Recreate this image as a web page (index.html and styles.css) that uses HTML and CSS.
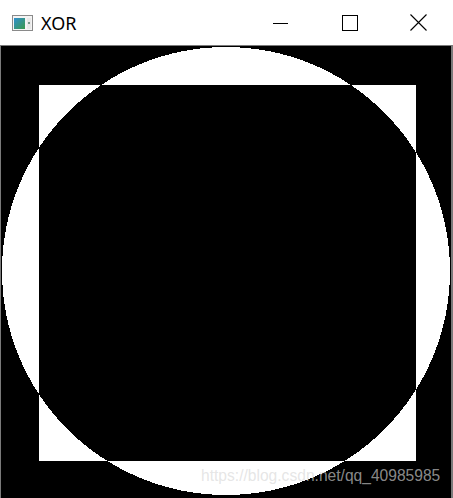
FILE: index.html
```html
<!DOCTYPE html>
<html lang="en">
<head>
    <meta charset="UTF-8">
    <title>XOR</title>
    <link rel="stylesheet" href="styles.css">
</head>
<body>
    <div class="window">
        <div class="titlebar">
            <svg class="app-icon" width="21" height="16" viewBox="0 0 21 16">
                <defs>
                    <linearGradient id="g" x1="0" y1="0" x2="1" y2="1">
                        <stop offset="0" stop-color="#2f8fd0"/>
                        <stop offset="1" stop-color="#3a9a4a"/>
                    </linearGradient>
                </defs>
                <rect x="0.5" y="0.5" width="20" height="15" fill="#f4f4f4" stroke="#8a8a8a"/>
                <rect x="2" y="3" width="11" height="11" fill="url(#g)"/>
                <rect x="15" y="3" width="4" height="11" fill="#e8e8e8"/>
                <rect x="16" y="7" width="2" height="2" fill="#7a9a8a"/>
            </svg>
            <span class="title">XOR</span>
            <div class="controls">
                <div class="ctl">
                    <svg width="16" height="16" viewBox="0 0 16 16"><line x1="0" y1="8.5" x2="15" y2="8.5" stroke="#000" stroke-width="1"/></svg>
                </div>
                <div class="ctl">
                    <svg width="16" height="16" viewBox="0 0 16 16"><rect x="0.5" y="0.5" width="15" height="15" fill="none" stroke="#000" stroke-width="1"/></svg>
                </div>
                <div class="ctl">
                    <svg width="17" height="17" viewBox="0 0 17 17"><path d="M0.5 0.5L16.5 16.5M16.5 0.5L0.5 16.5" stroke="#000" stroke-width="1.1"/></svg>
                </div>
            </div>
        </div>
        <div class="canvas">
            <svg width="450" height="452" viewBox="0 0 450 452" shape-rendering="crispEdges">
                <rect width="450" height="452" fill="#000"/>
                <path fill="#fff" fill-rule="evenodd"
                      d="M38 39h377v376H38z M1 225a224 224 0 1 0 448 0a224 224 0 1 0 -448 0z"/>
            </svg>
            <span class="watermark">https://blog.csdn.net/qq_40985985</span>
        </div>
    </div>
</body>
</html>
```

FILE: styles.css
```css
*{
    margin: 0;
    padding: 0;
}
body{
    background: #fff;
    width: 453px;
    height: 498px;
    overflow: hidden;
}
.window{
    width: 453px;
    height: 498px;
    display: flex;
    flex-direction: column;
}
.titlebar{
    height: 45px;
    display: flex;
    align-items: center;
    background: #fff;
}
.app-icon{
    margin-left: 12px;
    margin-top: 1px;
}
.title{
    margin-left: 8px;
    font-family: "Noto Sans", "Liberation Sans", sans-serif;
    font-size: 18px;
    color: #000;
}
.controls{
    margin-left: auto;
    display: flex;
    height: 45px;
}
.ctl{
    width: 69px;
    height: 45px;
    display: flex;
    align-items: center;
    justify-content: center;
}
.ctl svg{
    display: block;
}
.canvas{
    position: relative;
    height: 453px;
    border-top: 1px solid #7a7a7a;
    border-left: 1px solid #7a7a7a;
    border-right: 2px solid #7a7a7a;
    background: #000;
}
.canvas svg{
    display: block;
}
.watermark{
    position: absolute;
    left: 200px;
    top: 421px;
    font-family: "Liberation Sans", Arial, sans-serif;
    font-size: 15.6px;
    color: rgba(215, 215, 215, 0.65);
    white-space: nowrap;
}
```
